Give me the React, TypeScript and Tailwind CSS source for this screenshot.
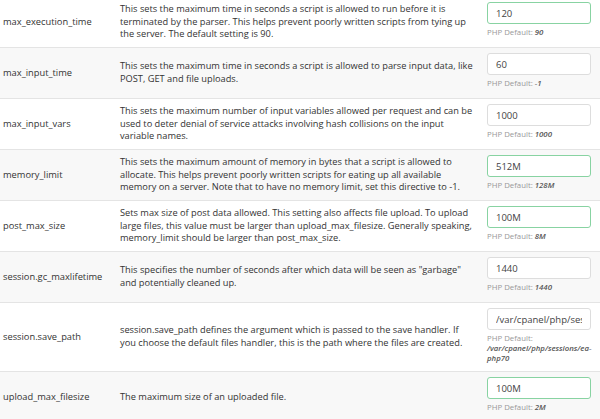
const rows = [
  {
    name: "max_execution_time",
    desc: "This sets the maximum time in seconds a script is allowed to run before it is terminated by the parser. This helps prevent poorly written scripts from tying up the server. The default setting is 90.",
    value: "120",
    def: "90",
    changed: true,
  },
  {
    name: "max_input_time",
    desc: "This sets the maximum time in seconds a script is allowed to parse input data, like POST, GET and file uploads.",
    value: "60",
    def: "-1",
    changed: false,
  },
  {
    name: "max_input_vars",
    desc: "This sets the maximum number of input variables allowed per request and can be used to deter denial of service attacks involving hash collisions on the input variable names.",
    value: "1000",
    def: "1000",
    changed: false,
  },
  {
    name: "memory_limit",
    desc: "This sets the maximum amount of memory in bytes that a script is allowed to allocate. This helps prevent poorly written scripts for eating up all available memory on a server. Note that to have no memory limit, set this directive to -1.",
    value: "512M",
    def: "128M",
    changed: true,
  },
  {
    name: "post_max_size",
    desc: "Sets max size of post data allowed. This setting also affects file upload. To upload large files, this value must be larger than upload_max_filesize. Generally speaking, memory_limit should be larger than post_max_size.",
    value: "100M",
    def: "8M",
    changed: true,
  },
  {
    name: "session.gc_maxlifetime",
    desc: 'This specifies the number of seconds after which data will be seen as "garbage" and potentially cleaned up.',
    value: "1440",
    def: "1440",
    changed: false,
  },
  {
    name: "session.save_path",
    desc: "session.save_path defines the argument which is passed to the save handler. If\nyou choose the default files handler, this is the path where the files are created.",
    value: "/var/cpanel/php/sessions/ea-php70",
    def: "/var/cpanel/php/sessions/ea-php70",
    changed: false,
  },
  {
    name: "upload_max_filesize",
    desc: "The maximum size of an uploaded file.",
    value: "100M",
    def: "2M",
    changed: true,
  },
];

export default function App() {
  return (
    <div className="h-[419px] w-[600px] overflow-hidden bg-white font-['Open_Sans',sans-serif] text-[#333]">
      <div className="-mt-[3px]">
        {rows.map((r, i) => (
          <div
            key={r.name}
            className={
              "grid min-h-[51px] grid-cols-[120px_1fr_120px] border-b border-[#e4e4e4] " +
              (i % 2 === 1 ? "bg-[#f8f8f8]" : "bg-white")
            }
          >
            <div className="flex items-center pl-[3px] text-[9.3px]">{r.name}</div>
            <div className="flex items-center py-[5px] pr-[4px] text-[9.25px] leading-[12.6px]">
              <p className="whitespace-pre-line">{r.desc}</p>
            </div>
            <div className="pt-[5px] pb-[8px] pl-[7px] pr-[9px]">
              <input
                readOnly
                value={r.value}
                className={
                  "block h-[22px] w-full rounded-[3px] border bg-white px-[8px] text-[9.5px] text-[#444] outline-none " +
                  (r.changed ? "border-[#88d3a2]" : "border-[#ddd]")
                }
              />
              <p className="mt-[3px] text-[7.8px] leading-[10px] text-[#999]">
                PHP Default: <em className="font-semibold text-[#555]">{r.def}</em>
              </p>
            </div>
          </div>
        ))}
      </div>
    </div>
  );
}
